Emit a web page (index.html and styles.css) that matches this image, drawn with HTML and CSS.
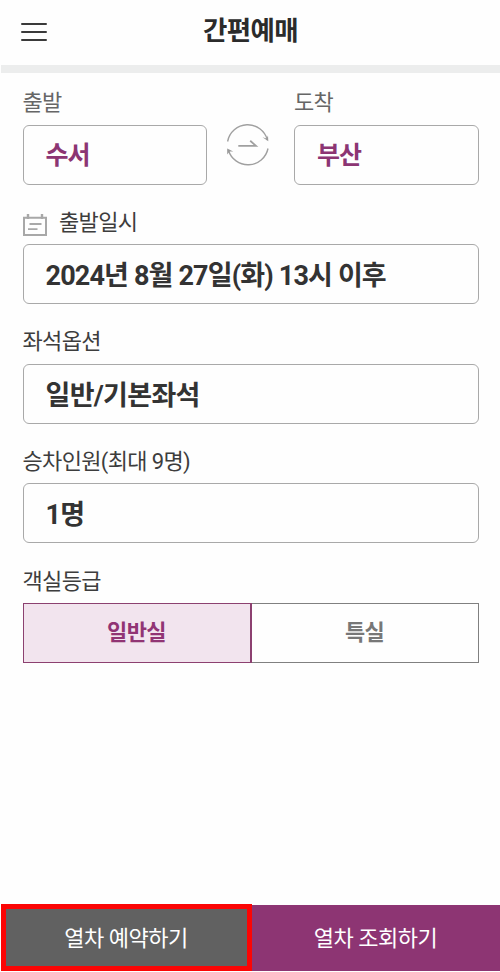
FILE: index.html
```html
<!DOCTYPE html>
<html lang="ko">
<head>
    <meta charset="UTF-8">
    <meta name="viewport" content="width=device-width, initial-scale=1.0">
    <title>간편예매</title>
    <link rel="stylesheet" href="styles.css">
</head>
<body>
    <header class="header">
        <button class="menu-btn" aria-label="메뉴">
            <span></span>
            <span></span>
            <span></span>
        </button>
        <h1>간편예매</h1>
    </header>

    <main class="booking">
        <div class="stations">
            <div class="field">
                <div class="label light">출발</div>
                <div class="box station">수서</div>
            </div>
            <button class="swap-btn" aria-label="출발 도착 바꾸기">
                <svg width="44" height="44" viewBox="0 0 44 44" fill="none" stroke="#a0a0a0" stroke-width="1.4">
                    <path d="M1.6 18.5A20.4 20.4 0 0 1 41.4 17"/>
                    <path d="M42 25.5A20.4 20.4 0 0 1 2.4 27"/>
                    <path d="M36.5 14.2L42.3 18.2L42 12.6L40.6 15.4Z" fill="#999" stroke="none"/>
                    <path d="M1.2 31.5V25.6L7.2 28.6L3.6 28.4Z" fill="#999" stroke="none"/>
                    <path d="M12.3 22.9H30L24.2 17.8" stroke-width="1.8"/>
                </svg>
            </button>
            <div class="field">
                <div class="label light">도착</div>
                <div class="box station">부산</div>
            </div>
        </div>

        <div class="field">
            <div class="label">
                <svg class="calendar" width="24" height="22" viewBox="0 0 24 22" fill="none" stroke="#a8a8a8" stroke-width="2">
                    <path d="M1 3.8H23V21H1Z"/>
                    <path d="M5 0V5M19 0V5" stroke-width="2.4"/>
                    <path d="M6.5 10H18.5M5 15.2H14.5" stroke-width="1.8"/>
                </svg>
                출발일시
            </div>
            <div class="box date">2024년 8월 27일(화) 13시 이후</div>
        </div>

        <div class="field">
            <div class="label">좌석옵션</div>
            <div class="box">일반/기본좌석</div>
        </div>

        <div class="field">
            <div class="label">승차인원(최대 9명)</div>
            <div class="box">1명</div>
        </div>

        <div class="field">
            <div class="label">객실등급</div>
            <div class="grades">
                <button class="grade selected">일반실</button>
                <button class="grade">특실</button>
            </div>
        </div>
    </main>

    <footer class="footer">
        <button class="reserve">열차 예약하기</button>
        <button class="search">열차 조회하기</button>
    </footer>
</body>
</html>
```

FILE: styles.css
```css
* {
    box-sizing: border-box;
}
body {
    display: flex;
    flex-direction: column;
    height: 972px;
    margin: 0;
    padding-bottom: 1px;
    background-color: #fefefe;
    color: #333;
    font-family: Roboto, "Noto Sans CJK KR", sans-serif;
    font-size: 22px;
    letter-spacing: -0.65px;
}
button {
    padding: 0;
    border: none;
    background: none;
    color: inherit;
    font: inherit;
    letter-spacing: inherit;
    cursor: pointer;
}
.header {
    display: grid;
    grid-template-columns: 48px 1fr 48px;
    align-items: center;
    height: 73px;
    margin-left: 1px;
    border-bottom: 8px solid #eceded;
}
h1 {
    margin: 0;
    padding-bottom: 4px;
    font-size: 26.5px;
    line-height: 36px;
    text-align: center;
    letter-spacing: -0.6px;
    color: #2b2b2b;
}
.menu-btn {
    display: flex;
    flex-direction: column;
    gap: 6px;
    width: 26px;
    margin-left: 20px;
    padding-bottom: 1px;
}
.menu-btn span {
    height: 2px;
    border-radius: 1px;
    background-color: #3a3a3a;
}
.booking {
    flex: 1;
    padding: 12px 21.5px 0 22.5px;
}
.stations {
    display: grid;
    grid-template-columns: 184.5px 1fr 184.5px;
}
.field {
    height: 119.6px;
}
.label {
    display: flex;
    align-items: center;
    height: 39.5px;
    padding-bottom: 3px;
    line-height: 32px;
    color: #3d3d3d;
}
.label.light {
    padding-bottom: 4px;
    color: #666;
}
.calendar {
    margin: 4px 12.5px 0 0;
}
.box {
    display: flex;
    align-items: center;
    height: 60px;
    padding: 0 22px 1px;
    border: 1px solid #a9a9a9;
    border-radius: 6px;
    font-size: 27px;
    font-weight: bold;
    letter-spacing: -0.7px;
    white-space: nowrap;
}
.date {
    letter-spacing: -0.85px;
}
.station {
    padding-bottom: 4px;
    font-size: 25px;
    letter-spacing: -1px;
    color: #8c3573;
}
.swap-btn {
    display: flex;
    height: 44px;
    margin: 38px 0 0 19px;
}
.grades {
    display: flex;
    height: 60px;
}
.grade {
    flex: 1;
    padding-bottom: 6px;
    border: 1px solid #808080;
    border-left: none;
    font-weight: bold;
    color: #777;
}
.grade.selected {
    border: 1px solid #8c4070;
    border-right-width: 2px;
    background-color: #f2e4ee;
    color: #913474;
}
.footer {
    display: flex;
    height: 67px;
    margin-left: 1px;
    color: #fff;
    letter-spacing: -0.5px;
}
.reserve {
    width: 251px;
    padding: 0 1px 4px 0;
    border: 5px solid #fb0505;
    background-color: #616161;
}
.search {
    flex: 1;
    margin-top: 1px;
    padding: 0 1px 4px 0;
    background-color: #8d3573;
}
```
